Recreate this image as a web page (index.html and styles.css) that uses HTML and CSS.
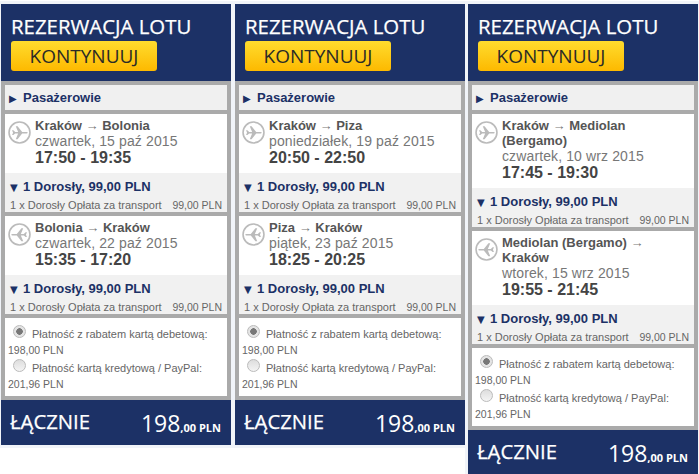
FILE: index.html
```html
<!DOCTYPE html>
<html lang="pl">
<head>
    <meta charset="UTF-8">
    <title>Rezerwacja lotu</title>
    <link rel="stylesheet" href="styles.css">
</head>
<body>
    <svg class="defs" width="0" height="0">
        <symbol id="plane" viewBox="0 0 24 24">
            <circle cx="12" cy="12" r="10.9" fill="none" stroke="currentColor" stroke-width="1.7"/>
            <path d="M4.200 9.700h1.400l1.900 1.700h3.100L8.100 5.400h1.900l4.800 6h3.800c1.200 0 2.100.3 2.100.8s-.9.8-2.100.8h-3.800l-4.800 6H8.100l2.500-6H7.500l-1.900 1.700H4.200l1.100-2.500z" fill="currentColor"/>
        </symbol>
    </svg>

    <div class="page">
        <!-- Lot 1 -->
        <div class="panel">
            <div class="head">
                <div class="title">REZERWACJA LOTU</div>
                <button class="continue">KONTYNUUJ</button>
            </div>
            <div class="body">
                <div class="passengers"><span class="arrow">&#9654;</span>Pasażerowie</div>
                <div class="flight">
                    <svg class="plane"><use href="#plane"/></svg>
                    <div class="info">
                        <div class="route">Kraków <span class="to">&rarr;</span> Bolonia</div>
                        <div class="date">czwartek, 15 paź 2015</div>
                        <div class="time">17:50 - 19:35</div>
                    </div>
                </div>
                <div class="fare">
                    <div class="fare-title"><span class="down">&#9660;</span>1 Dorosły, 99,00 PLN</div>
                    <div class="fare-line"><span>1 x Dorosły Opłata za transport</span><span>99,00 PLN</span></div>
                </div>
                <div class="flight">
                    <svg class="plane back"><use href="#plane"/></svg>
                    <div class="info">
                        <div class="route">Bolonia <span class="to">&rarr;</span> Kraków</div>
                        <div class="date">czwartek, 22 paź 2015</div>
                        <div class="time">15:35 - 17:20</div>
                    </div>
                </div>
                <div class="fare">
                    <div class="fare-title"><span class="down">&#9660;</span>1 Dorosły, 99,00 PLN</div>
                    <div class="fare-line"><span>1 x Dorosły Opłata za transport</span><span>99,00 PLN</span></div>
                </div>
                <div class="payment">
                    <div class="pay-option"><span class="radio checked"></span>Płatność z rabatem kartą debetową:</div>
                    <div class="pay-price">198,00 PLN</div>
                    <div class="pay-option"><span class="radio"></span>Płatność kartą kredytową / PayPal:</div>
                    <div class="pay-price">201,96 PLN</div>
                </div>
            </div>
            <div class="total">
                <span class="total-label">ŁĄCZNIE</span>
                <span class="total-sum">198<small>,00 PLN</small></span>
            </div>
        </div>

        <!-- Lot 2 -->
        <div class="panel">
            <div class="head">
                <div class="title">REZERWACJA LOTU</div>
                <button class="continue">KONTYNUUJ</button>
            </div>
            <div class="body">
                <div class="passengers"><span class="arrow">&#9654;</span>Pasażerowie</div>
                <div class="flight">
                    <svg class="plane"><use href="#plane"/></svg>
                    <div class="info">
                        <div class="route">Kraków <span class="to">&rarr;</span> Piza</div>
                        <div class="date">poniedziałek, 19 paź 2015</div>
                        <div class="time">20:50 - 22:50</div>
                    </div>
                </div>
                <div class="fare">
                    <div class="fare-title"><span class="down">&#9660;</span>1 Dorosły, 99,00 PLN</div>
                    <div class="fare-line"><span>1 x Dorosły Opłata za transport</span><span>99,00 PLN</span></div>
                </div>
                <div class="flight">
                    <svg class="plane back"><use href="#plane"/></svg>
                    <div class="info">
                        <div class="route">Piza <span class="to">&rarr;</span> Kraków</div>
                        <div class="date">piątek, 23 paź 2015</div>
                        <div class="time">18:25 - 20:25</div>
                    </div>
                </div>
                <div class="fare">
                    <div class="fare-title"><span class="down">&#9660;</span>1 Dorosły, 99,00 PLN</div>
                    <div class="fare-line"><span>1 x Dorosły Opłata za transport</span><span>99,00 PLN</span></div>
                </div>
                <div class="payment">
                    <div class="pay-option"><span class="radio checked"></span>Płatność z rabatem kartą debetową:</div>
                    <div class="pay-price">198,00 PLN</div>
                    <div class="pay-option"><span class="radio"></span>Płatność kartą kredytową / PayPal:</div>
                    <div class="pay-price">201,96 PLN</div>
                </div>
            </div>
            <div class="total">
                <span class="total-label">ŁĄCZNIE</span>
                <span class="total-sum">198<small>,00 PLN</small></span>
            </div>
        </div>

        <!-- Lot 3 -->
        <div class="panel">
            <div class="head">
                <div class="title">REZERWACJA LOTU</div>
                <button class="continue">KONTYNUUJ</button>
            </div>
            <div class="body">
                <div class="passengers"><span class="arrow">&#9654;</span>Pasażerowie</div>
                <div class="flight">
                    <svg class="plane"><use href="#plane"/></svg>
                    <div class="info">
                        <div class="route">Kraków <span class="to">&rarr;</span> Mediolan<br>(Bergamo)</div>
                        <div class="date">czwartek, 10 wrz 2015</div>
                        <div class="time">17:45 - 19:30</div>
                    </div>
                </div>
                <div class="fare">
                    <div class="fare-title"><span class="down">&#9660;</span>1 Dorosły, 99,00 PLN</div>
                    <div class="fare-line"><span>1 x Dorosły Opłata za transport</span><span>99,00 PLN</span></div>
                </div>
                <div class="flight">
                    <svg class="plane back"><use href="#plane"/></svg>
                    <div class="info">
                        <div class="route">Mediolan (Bergamo) <span class="to">&rarr;</span><br>Kraków</div>
                        <div class="date">wtorek, 15 wrz 2015</div>
                        <div class="time">19:55 - 21:45</div>
                    </div>
                </div>
                <div class="fare">
                    <div class="fare-title"><span class="down">&#9660;</span>1 Dorosły, 99,00 PLN</div>
                    <div class="fare-line"><span>1 x Dorosły Opłata za transport</span><span>99,00 PLN</span></div>
                </div>
                <div class="payment">
                    <div class="pay-option"><span class="radio checked"></span>Płatność z rabatem kartą debetową:</div>
                    <div class="pay-price">198,00 PLN</div>
                    <div class="pay-option"><span class="radio"></span>Płatność kartą kredytową / PayPal:</div>
                    <div class="pay-price">201,96 PLN</div>
                </div>
            </div>
            <div class="total">
                <span class="total-label">ŁĄCZNIE</span>
                <span class="total-sum">198<small>,00 PLN</small></span>
            </div>
        </div>
    </div>
</body>
</html>
```

FILE: styles.css
```css
body {
    margin: 0;
    background-color: #fff;
    font-family: "Liberation Sans", Arial, sans-serif;
    color: #555;
}

.defs {
    display: block;
    height: 0;
}

.page {
    display: flex;
    align-items: flex-start;
    gap: 4px;
    padding: 4px 0 0 1px;
}

.panel {
    width: 230px;
    flex: none;
    box-shadow: 0 0 0 3px #f1f4f9;
}

.panel:last-child {
    margin-left: -1px;
}

.head {
    height: 77px;
    box-sizing: border-box;
    padding: 10px 10px 0;
    background-color: #1c3166;
}

.title {
    font-family: "Open Sans", sans-serif;
    font-size: 20.400px;
    line-height: 25px;
    -webkit-text-stroke: 0.25px #fff;
    color: #fff;
    white-space: nowrap;
}

.continue {
    display: block;
    width: 146px;
    height: 30px;
    margin-top: 2px;
    padding: 0;
    border: none;
    border-radius: 3px;
    background: linear-gradient(#ffdc2e, #fdb900);
    font-family: "Open Sans", sans-serif;
    font-size: 19px;
    color: #2b2b26;
}

.body {
    display: flex;
    flex-direction: column;
    gap: 4px;
    padding: 4px;
    background-color: #aaa;
}

.passengers {
    height: 25px;
    line-height: 25px;
    padding-left: 4px;
    background-color: #f0f0f0;
    font-size: 13px;
    font-weight: bold;
    color: #1c3166;
}

.arrow {
    display: inline-block;
    width: 14px;
    font-family: "DejaVu Sans", sans-serif;
    font-size: 10px;
}

.flight {
    display: flex;
    padding: 4px 3px 0;
    background-color: #fff;
}

.flight + .fare {
    margin-top: -4px;
}

.plane {
    width: 23px;
    height: 23px;
    flex: none;
    margin-top: 3px;
    color: #bbb;
}

.plane.back {
    transform: scaleX(-1);
}

.info {
    margin-left: 4px;
    padding-bottom: 6px;
}

.route {
    font-size: 13px;
    line-height: 15px;
    font-weight: bold;
    color: #555;
}

.to {
    font-weight: normal;
    color: #777;
}

.date {
    font-size: 14px;
    line-height: 16px;
    letter-spacing: 0.12px;
    color: #777;
}

.time {
    font-size: 16px;
    line-height: 18px;
    font-weight: bold;
    color: #444;
}

.fare {
    height: 39px;
    box-sizing: border-box;
    padding: 6px 5px 0;
    background-color: #f1f1f1;
}

.fare-title {
    font-size: 13px;
    line-height: 16px;
    font-weight: bold;
    color: #1c3166;
}

.down {
    display: inline-block;
    width: 13px;
    font-family: "DejaVu Sans", sans-serif;
    font-size: 10px;
}

.fare-line {
    display: flex;
    justify-content: space-between;
    margin-top: 2px;
    font-size: 11px;
    line-height: 14px;
    color: #666;
}

.fare-line span:last-child {
    font-size: 10.500px;
}

.payment {
    height: 78px;
    box-sizing: border-box;
    padding: 8px 3px 0;
    background-color: #fff;
    font-size: 11px;
    color: #666;
}

.pay-option {
    display: flex;
    height: 17px;
    line-height: 17px;
}

.pay-price {
    font-size: 10.500px;
    line-height: 14px;
    margin-bottom: 3px;
}

.radio {
    flex: none;
    box-sizing: border-box;
    width: 13px;
    height: 13px;
    margin: -1px 6px 0 5px;
    border: 1px solid #bbb;
    border-radius: 50%;
    background: linear-gradient(#ddd, #f4f4f4);
}

.radio.checked {
    background: radial-gradient(circle, #777 0 3px, #e4e4e4 3.500px);
}

.total {
    display: flex;
    justify-content: space-between;
    align-items: center;
    height: 45px;
    box-sizing: border-box;
    padding: 0 10px 0 9px;
    background-color: #1c3166;
    color: #fff;
    font-family: "Open Sans", sans-serif;
}

.total-label {
    font-size: 20.300px;
    -webkit-text-stroke: 0.25px #fff;
    margin-bottom: 4px;
}

.total-sum {
    font-size: 23px;
}

.total-sum small {
    font-size: 11px;
    font-weight: bold;
}
```
